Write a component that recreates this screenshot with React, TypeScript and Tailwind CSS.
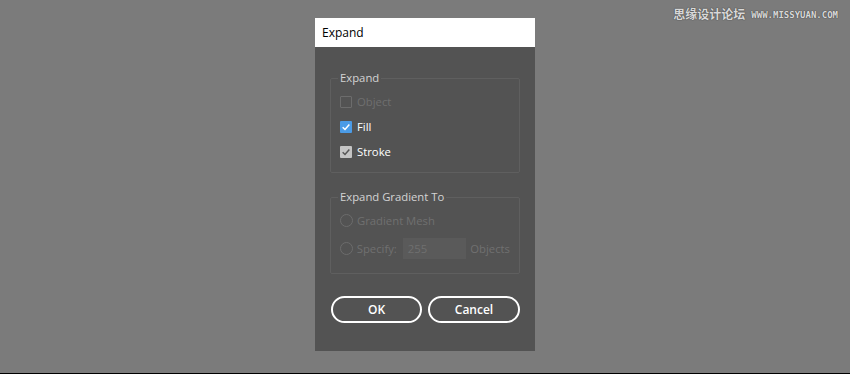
import React from 'react';

const font = { fontFamily: '"Open Sans", "Noto Sans", "Noto Sans CJK SC", sans-serif' };

const Check = ({ color }: { color: string }) => (
  <svg viewBox="0 0 12 12" className="w-[10px] h-[10px]">
    <path d="M2 6.2 L4.8 9 L10 3" fill="none" stroke={color} strokeWidth="1.8" />
  </svg>
);

const Checkbox = ({ state }: { state: 'off' | 'blue' | 'gray' }) => {
  if (state === 'off')
    return <span className="w-[12px] h-[12px] border border-[#6c6c6c] rounded-[1px]" />;
  if (state === 'blue')
    return (
      <span className="w-[12px] h-[12px] bg-[#4b9be6] rounded-[1px] flex items-center justify-center">
        <Check color="#ffffff" />
      </span>
    );
  return (
    <span className="w-[12px] h-[12px] bg-[#c4c4c4] rounded-[1px] flex items-center justify-center">
      <Check color="#555555" />
    </span>
  );
};

const Radio = () => <span className="w-[13px] h-[13px] rounded-full border border-[#6c6c6c]" />;

export default function App() {
  return (
    <div className="relative w-[850px] h-[374px] bg-[#7b7b7b] overflow-hidden" style={font}>
      {/* watermark */}
      <div
        className="absolute top-[9px] right-[12px] flex items-center gap-[6px] text-[#d8d8d8]"
        style={{ textShadow: '0 0 1px #444, 0 0 1px #444' }}
      >
        <span className="text-[12px] font-bold leading-none">思缘设计论坛</span>
        <span className="text-[9px] font-bold leading-none" style={{ fontFamily: '"DejaVu Sans Mono", monospace' }}>
          WWW.MISSYUAN.COM
        </span>
      </div>

      <div className="flex flex-col items-center pt-[18px]">
        <div className="w-[220px] h-[333px] bg-[#535353] flex flex-col">
          <div className="h-[29px] bg-white flex items-center px-[7px] text-[12px] text-black">Expand</div>

          <div className="flex flex-col px-[15px] pt-[24px] text-[11.3px]">
            <fieldset className="min-w-0 border border-[#5f5f5f] rounded-[2px] h-[102px] px-[9px] pt-[9px]">
              <legend className="px-[2px] -ml-[2px] text-[#d4d4d4] leading-[14px]">Expand</legend>
              <div className="flex flex-col gap-[10px] leading-[15px]">
                <div className="flex items-center gap-[5px] text-[#6f6f6f]">
                  <Checkbox state="off" />
                  Object
                </div>
                <div className="flex items-center gap-[5px] text-white">
                  <Checkbox state="blue" />
                  Fill
                </div>
                <div className="flex items-center gap-[5px] text-white">
                  <Checkbox state="gray" />
                  Stroke
                </div>
              </div>
            </fieldset>

            <fieldset className="min-w-0 mt-[17px] border border-[#5f5f5f] rounded-[2px] h-[84px] px-[9px] pt-[9px]">
              <legend className="px-[2px] -ml-[2px] text-[#d4d4d4] leading-[14px]">Expand Gradient To</legend>
              <div className="flex flex-col gap-[10px] text-[#707070] leading-[15px] whitespace-nowrap">
                <div className="flex items-center gap-[4px]">
                  <Radio />
                  Gradient Mesh
                </div>
                <div className="flex items-center gap-[4px]">
                  <Radio />
                  Specify:
                  <span className="ml-[2px] w-[65px] h-[21px] bg-[#5a5a5a] flex items-center px-[5px] text-[#6f6f6f]">255</span>
                  Objects
                </div>
              </div>
            </fieldset>

            <div className="flex gap-[6px] mt-[22px] pl-[1px]">
              <button className="w-[91px] h-[27px] rounded-full border-2 border-white text-white text-[12px] font-semibold" style={font}>
                OK
              </button>
              <button className="w-[92px] h-[27px] rounded-full border-2 border-white text-white text-[12px] font-semibold" style={font}>
                Cancel
              </button>
            </div>
          </div>
        </div>
      </div>

      <div className="absolute bottom-0 left-0 w-full h-[1px] bg-black" />
    </div>
  );
}
